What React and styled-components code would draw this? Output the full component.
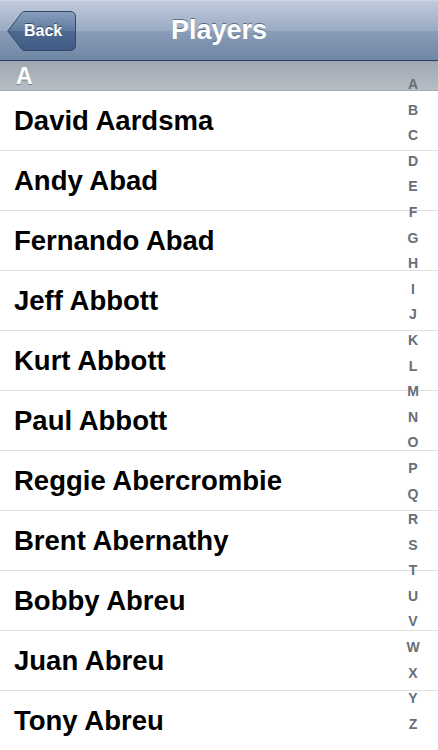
import React from 'react';
import styled, { createGlobalStyle } from 'styled-components';

const GlobalStyle = createGlobalStyle`
  html, body {
    margin: 0;
    padding: 0;
    background: #ffffff;
    font-family: "Liberation Sans", Arial, Helvetica, sans-serif;
  }
`;

const Screen = styled.div`
  position: relative;
  width: 438px;
  height: 750px;
  overflow: hidden;
  background: #ffffff;
`;

const NavBar = styled.div`
  height: 61px;
  display: flex;
  align-items: center;
  justify-content: center;
  position: relative;
  background: linear-gradient(#c0cbdb 0%, #9aabc3 50%, #8a9db8 51%, #6f86a5 100%);
  border-top: 1px solid #cdd5e1;
  border-bottom: 1px solid #2d3f5a;
  box-sizing: border-box;
`;

const Title = styled.h1`
  margin: 0;
  font-size: 27px;
  font-weight: bold;
  color: #ffffff;
  text-shadow: 0 -1px 0 rgba(40, 55, 80, 0.6);
`;

const BackButton = styled.div`
  position: absolute;
  left: 7px;
  top: 10px;
  display: flex;
  align-items: center;
`;

const BackLabel = styled.span`
  position: absolute;
  left: 17px;
  top: 0;
  height: 39px;
  line-height: 39px;
  font-size: 16px;
  font-weight: bold;
  color: #ffffff;
  text-shadow: 0 -1px 0 rgba(20, 35, 60, 0.6);
`;

const SectionHeader = styled.div`
  height: 30px;
  padding-left: 16px;
  display: flex;
  align-items: center;
  background: linear-gradient(#a0a9b2, #b6bdc5);
  border-top: 1px solid #9aa3ad;
  border-bottom: 1px solid #a3abb3;
  box-sizing: border-box;
  font-size: 23px;
  font-weight: bold;
  color: #ffffff;
  text-shadow: 0 1px 0 rgba(60, 70, 80, 0.55);
`;

const List = styled.div`
  display: flex;
  flex-direction: column;
`;

const Row = styled.div`
  height: 60px;
  flex: none;
  display: flex;
  align-items: center;
  padding-left: 14px;
  border-bottom: 1px solid #e0e0e0;
  box-sizing: border-box;
  font-size: 27.5px;
  font-weight: bold;
  color: #000000;
`;

const Index = styled.div`
  position: absolute;
  right: 13px;
  top: 72px;
  width: 24px;
  display: flex;
  flex-direction: column;
  align-items: center;
`;

const IndexLetter = styled.span`
  height: 25.6px;
  line-height: 25.6px;
  font-size: 14px;
  font-weight: bold;
  color: #686e78;
`;

const players = [
  'David Aardsma',
  'Andy Abad',
  'Fernando Abad',
  'Jeff Abbott',
  'Kurt Abbott',
  'Paul Abbott',
  'Reggie Abercrombie',
  'Brent Abernathy',
  'Bobby Abreu',
  'Juan Abreu',
  'Tony Abreu',
];

const letters = 'ABCDEFGHIJKLMNOPQRSTUVWXYZ'.split('');

function BackShape() {
  return (
    <svg width="69" height="40" viewBox="0 0 69 40">
      <defs>
        <linearGradient id="backFill" x1="0" y1="0" x2="0" y2="1">
          <stop offset="0" stopColor="#8aa0bf" />
          <stop offset="0.5" stopColor="#5f789c" />
          <stop offset="0.51" stopColor="#4d6890" />
          <stop offset="1" stopColor="#3f5b85" />
        </linearGradient>
      </defs>
      <path
        d="M0.8 20 L15 1.5 Q16 0.5 18 0.5 L63 0.5 Q68.5 0.5 68.5 6 L68.5 34 Q68.5 39.5 63 39.5 L18 39.5 Q16 39.5 15 38.5 Z"
        fill="url(#backFill)"
        stroke="#34486a"
        strokeWidth="1"
      />
    </svg>
  );
}

export default function App() {
  return (
    <Screen>
      <GlobalStyle />
      <NavBar>
        <BackButton>
          <BackShape />
          <BackLabel>Back</BackLabel>
        </BackButton>
        <Title>Players</Title>
      </NavBar>
      <SectionHeader>A</SectionHeader>
      <List>
        {players.map((name) => (
          <Row key={name}>{name}</Row>
        ))}
      </List>
      <Index>
        {letters.map((l) => (
          <IndexLetter key={l}>{l}</IndexLetter>
        ))}
      </Index>
    </Screen>
  );
}
